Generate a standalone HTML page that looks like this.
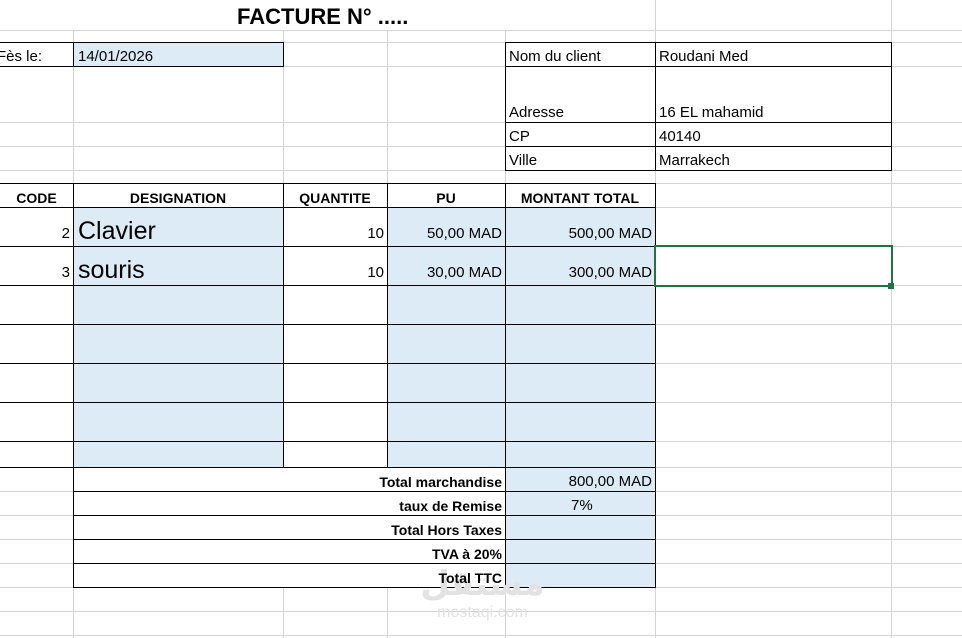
<!DOCTYPE html>
<html><head><meta charset="utf-8"><style>
body{margin:0;width:962px;height:638px;overflow:hidden;background:#fff;position:relative;font-family:"Liberation Sans",sans-serif;color:#000}
div{position:absolute;box-sizing:border-box}
.h{height:1px;background:#d4d4d4;left:0;width:962px}
.v{width:1px;background:#d4d4d4;top:30px;height:608px}
.bh{height:1px;background:#000}
.bv{width:1px;background:#000}
.bl{background:#ddebf7}
.w{background:#fff}
.t{font-size:15px;white-space:nowrap;line-height:24px;margin-top:2px}
.b{font-weight:bold;font-size:14px}
.r{text-align:right}
</style></head><body>
<!-- grid -->
<div class="h" style="top:30px"></div><div class="h" style="top:42px"></div><div class="h" style="top:66px"></div>
<div class="h" style="top:122px"></div><div class="h" style="top:146px"></div><div class="h" style="top:170px"></div>
<div class="h" style="top:183px"></div><div class="h" style="top:207px"></div><div class="h" style="top:246px"></div>
<div class="h" style="top:285px"></div><div class="h" style="top:324px"></div><div class="h" style="top:363px"></div>
<div class="h" style="top:402px"></div><div class="h" style="top:441px"></div><div class="h" style="top:467px"></div>
<div class="h" style="top:491px"></div><div class="h" style="top:515px"></div><div class="h" style="top:539px"></div>
<div class="h" style="top:563px"></div><div class="h" style="top:587px"></div><div class="h" style="top:611px"></div><div class="h" style="top:635px"></div>
<div class="v" style="left:73px"></div><div class="v" style="left:283px"></div><div class="v" style="left:387px"></div>
<div class="v" style="left:505px"></div><div class="v" style="left:655px;top:0;height:638px"></div><div class="v" style="left:891px;top:0;height:638px"></div>
<!-- fills -->
<div class="w" style="left:506px;top:43px;width:385px;height:127px"></div>
<div class="w" style="left:74px;top:468px;width:431px;height:119px"></div>
<div class="bl" style="left:73px;top:42px;width:210px;height:24px"></div>
<div class="bl" style="left:73px;top:207px;width:210px;height:260px"></div>
<div class="bl" style="left:387px;top:207px;width:268px;height:260px"></div>
<div class="bl" style="left:505px;top:467px;width:150px;height:120px"></div>
<!-- date borders -->
<div class="bh" style="left:0;top:42px;width:284px"></div><div class="bh" style="left:0;top:66px;width:284px"></div>
<div class="bv" style="left:73px;top:42px;height:25px"></div><div class="bv" style="left:283px;top:42px;height:25px"></div>
<!-- client -->
<div style="left:505px;top:42px;width:387px;height:129px;border:1px solid #000"></div>
<div class="bh" style="left:505px;top:66px;width:386px"></div><div class="bh" style="left:505px;top:122px;width:386px"></div><div class="bh" style="left:505px;top:146px;width:386px"></div>
<div class="bv" style="left:655px;top:42px;height:128px"></div>
<!-- items -->
<div class="bh" style="left:0;top:183px;width:656px"></div>
<div class="bh" style="left:0;top:207px;width:656px"></div><div class="bh" style="left:0;top:246px;width:656px"></div>
<div class="bh" style="left:0;top:285px;width:656px"></div><div class="bh" style="left:0;top:324px;width:656px"></div>
<div class="bh" style="left:0;top:363px;width:656px"></div><div class="bh" style="left:0;top:402px;width:656px"></div>
<div class="bh" style="left:0;top:441px;width:656px"></div><div class="bh" style="left:0;top:467px;width:656px"></div>
<div class="bv" style="left:73px;top:183px;height:285px"></div><div class="bv" style="left:283px;top:183px;height:285px"></div>
<div class="bv" style="left:387px;top:183px;height:285px"></div><div class="bv" style="left:505px;top:183px;height:405px"></div>
<div class="bv" style="left:655px;top:183px;height:405px"></div>
<!-- totals -->
<div class="bv" style="left:73px;top:467px;height:121px"></div>
<div class="bh" style="left:73px;top:491px;width:583px"></div><div class="bh" style="left:73px;top:515px;width:583px"></div>
<div class="bh" style="left:73px;top:539px;width:583px"></div><div class="bh" style="left:73px;top:563px;width:583px"></div>
<div class="bh" style="left:73px;top:587px;width:583px"></div>
<!-- selection -->
<div style="left:654px;top:245px;width:239px;height:42px;border:2px solid #217346"></div>
<div style="left:888px;top:283px;width:6px;height:6px;background:#217346"></div>
<!-- watermark -->
<div style="left:420px;top:566px;width:125px;text-align:center;color:#e2e2e2;font:bold 34px 'DejaVu Sans',sans-serif;line-height:36px">مستقل</div>
<div style="left:420px;top:604px;width:125px;text-align:center;color:#e2e2e2;font:16px 'Liberation Sans',sans-serif">mostaqi.com</div>
<!-- text -->
<div class="t" style="left:237px;top:2px;font-weight:bold;font-size:22px;line-height:26px">FACTURE N° .....</div>
<div class="t" style="left:-3px;top:43px">Fès le:</div>
<div class="t" style="left:78px;top:43px">14/01/2026</div>
<div class="t" style="left:509px;top:43px">Nom du client</div><div class="t" style="left:659px;top:43px">Roudani Med</div>
<div class="t" style="left:509px;top:99px">Adresse</div><div class="t" style="left:659px;top:99px">16 EL mahamid</div>
<div class="t" style="left:509px;top:123px">CP</div><div class="t" style="left:659px;top:123px">40140</div>
<div class="t" style="left:509px;top:147px">Ville</div><div class="t" style="left:659px;top:147px">Marrakech</div>
<div class="t b" style="left:0;width:73px;top:184px;text-align:center">CODE</div>
<div class="t b" style="left:73px;width:210px;top:184px;text-align:center">DESIGNATION</div>
<div class="t b" style="left:283px;width:104px;top:184px;text-align:center">QUANTITE</div>
<div class="t b" style="left:387px;width:118px;top:184px;text-align:center">PU</div>
<div class="t b" style="left:505px;width:150px;top:184px;text-align:center">MONTANT TOTAL</div>
<div class="t r" style="left:0;width:70px;top:220px">2</div>
<div class="t" style="left:78px;top:213px;font-size:25px;line-height:32px">Clavier</div>
<div class="t r" style="left:283px;width:101px;top:220px">10</div>
<div class="t r" style="left:387px;width:115px;top:220px">50,00 MAD</div>
<div class="t r" style="left:505px;width:147px;top:220px">500,00 MAD</div>
<div class="t r" style="left:0;width:70px;top:259px">3</div>
<div class="t" style="left:78px;top:252px;font-size:25px;line-height:32px">souris</div>
<div class="t r" style="left:283px;width:101px;top:259px">10</div>
<div class="t r" style="left:387px;width:115px;top:259px">30,00 MAD</div>
<div class="t r" style="left:505px;width:147px;top:259px">300,00 MAD</div>
<div class="t b r" style="left:73px;width:429px;top:468px">Total marchandise</div>
<div class="t r" style="left:505px;width:147px;top:468px">800,00 MAD</div>
<div class="t b r" style="left:73px;width:429px;top:492px">taux de Remise</div>
<div class="t" style="left:571px;top:492px">7%</div>
<div class="t b r" style="left:73px;width:429px;top:516px">Total Hors Taxes</div>
<div class="t b r" style="left:73px;width:429px;top:540px">TVA à 20%</div>
<div class="t b r" style="left:73px;width:429px;top:564px">Total TTC</div>
</body></html>
